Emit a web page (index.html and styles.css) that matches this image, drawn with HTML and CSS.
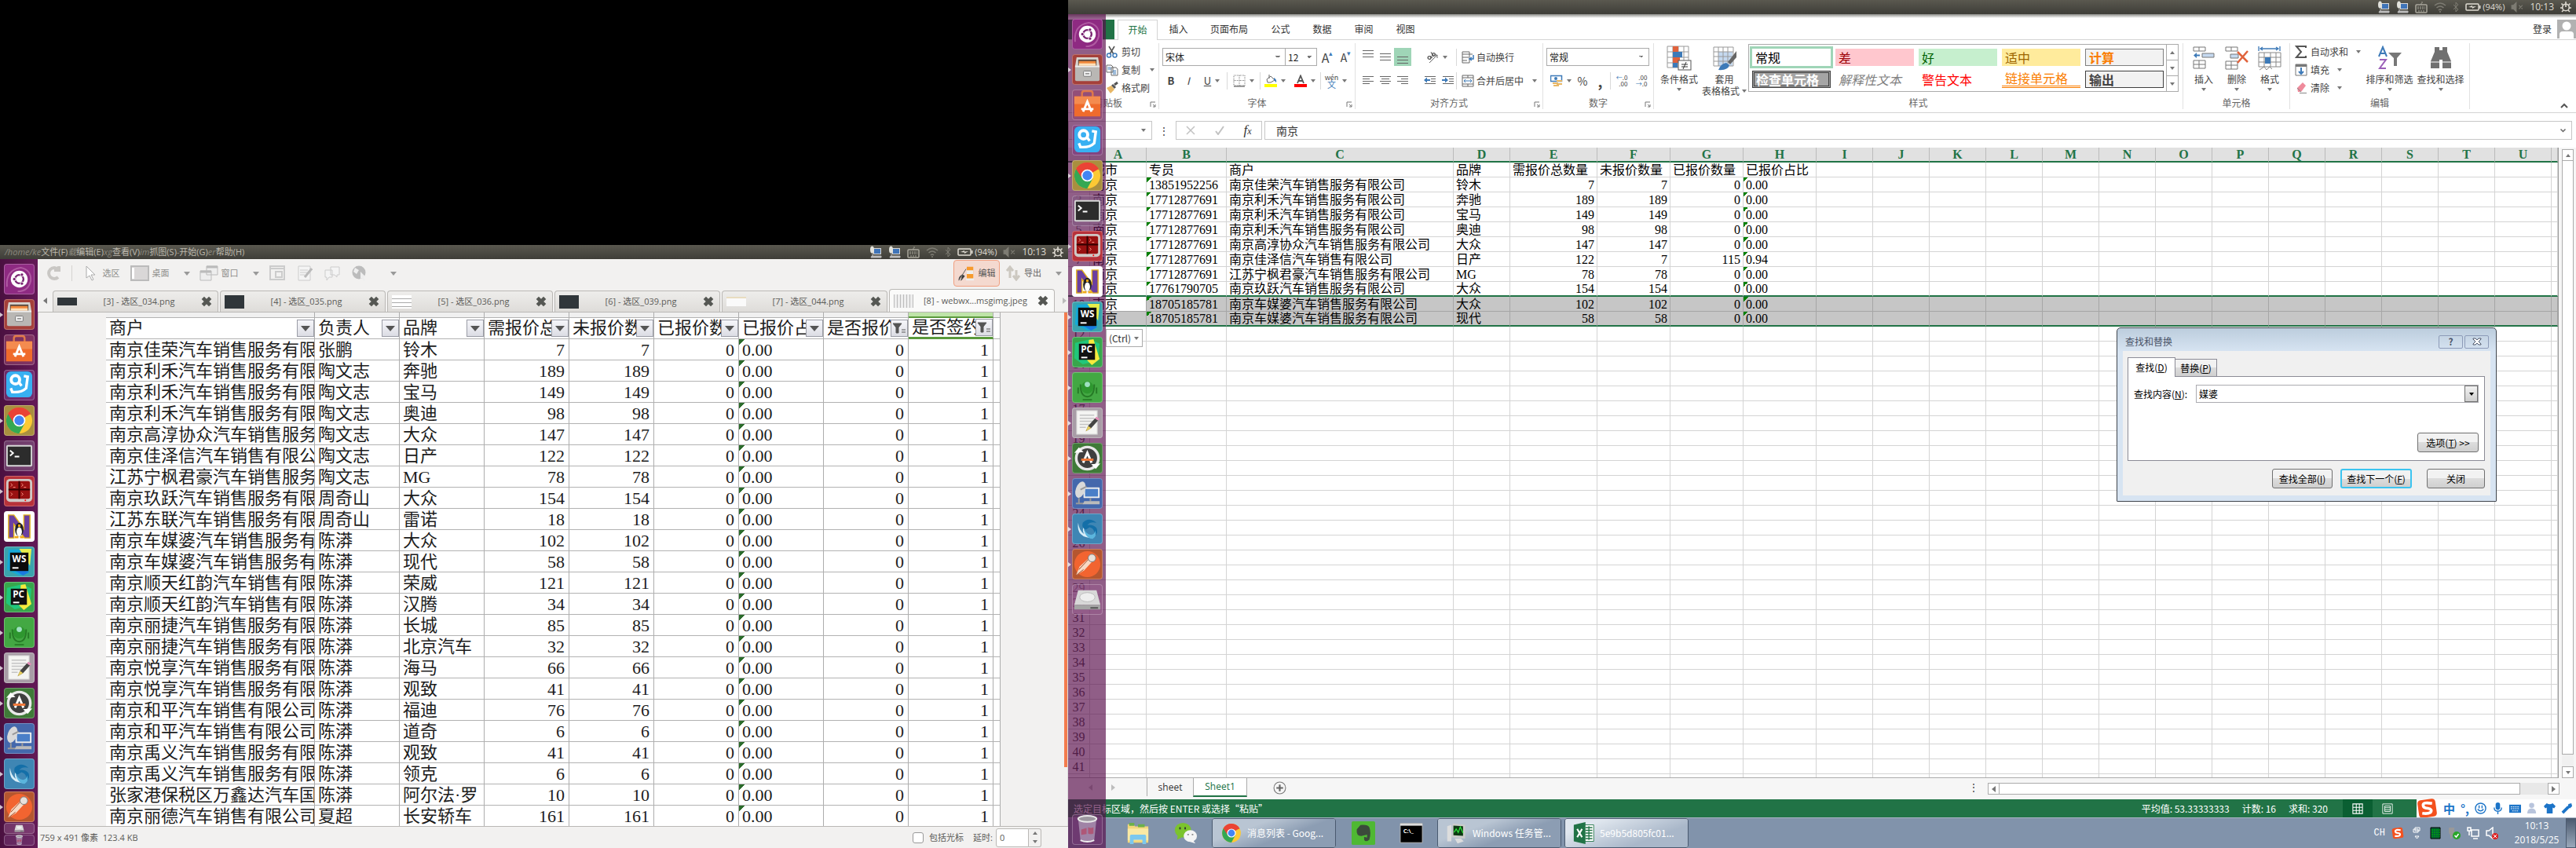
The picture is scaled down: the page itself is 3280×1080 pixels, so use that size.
FILE: index.html
```html
<!DOCTYPE html>
<html lang="zh-CN">
<head>
<meta charset="utf-8">
<title>桌面</title>
<link rel="stylesheet" href="styles.css">
</head>
<body>
<svg class="defs" aria-hidden="true">
  <symbol id="a-ubuntu" viewBox="0 0 40 40"><path d="M4 30Q2 8 22 5Q36 8 35 22Q32 36 18 36" fill="none" stroke="#c77bb8" stroke-width="2" opacity=".6"/><circle cx="20" cy="20" r="11" fill="#fff"/><circle cx="20" cy="20" r="5.500" fill="none" stroke="#77216f" stroke-width="2.400"/><circle cx="13.500" cy="20" r="2.200" fill="#77216f" stroke="#fff"/><circle cx="23.500" cy="14.200" r="2.200" fill="#77216f" stroke="#fff"/><circle cx="23.500" cy="25.800" r="2.200" fill="#77216f" stroke="#fff"/></symbol>
  <symbol id="a-files" viewBox="0 0 40 40"><path d="M6 4h28l2 12H4z" fill="#d8d4d0"/><path d="M8 7h24v9H8z" fill="#5b4a40"/><path d="M9 9h22v7H9z" fill="#f0883c"/><path d="M9 12h22v3H9z" fill="#ffe0b8"/><rect x="4" y="15" width="32" height="20" rx="2" fill="#b9b7b4"/><rect x="4" y="15" width="32" height="2" fill="#eee"/><rect x="15" y="22" width="10" height="7" rx="1" fill="#eee" stroke="#777"/><path d="M17.500 25.500h5" stroke="#555"/></symbol>
  <symbol id="a-store" viewBox="0 0 40 40"><path d="M13 11V5q0-3 3-3h8q3 0 3 3v6" fill="none" stroke="#e0794a" stroke-width="2.500"/><path d="M3 9h34v26H3z" fill="#ef6b2c"/><path d="M3 9h34v10H3z" fill="#f48b4f"/><path d="M14.500 29L20 16l5.500 13M12 25.500h16" fill="none" stroke="#fff" stroke-width="3"/></symbol>
  <symbol id="a-blue" viewBox="0 0 40 40"><rect x="3" y="2" width="34" height="34" rx="6" fill="#38b0f2"/><circle cx="15" cy="13" r="5.500" fill="none" stroke="#fff" stroke-width="4"/><path d="M26 8l5 1-2 15q-6 6-18 5l-2-5M20 17l3 4" fill="none" stroke="#fff" stroke-width="3.500"/></symbol>
  <symbol id="a-chrome" viewBox="0 0 40 40"><circle cx="20" cy="20" r="17" fill="#fcc934"/><path d="M20 20L5.300 11.500A17 17 0 0 1 34.700 11.500z" fill="#ea4335"/><path d="M20 20L5.300 11.500A17 17 0 0 0 20 37l7-13z" fill="#34a853"/><path d="M20 12h15a17 17 0 0 0-29.700-.5L12 22z" fill="#ea4335"/><circle cx="20" cy="20" r="8" fill="#fff"/><circle cx="20" cy="20" r="6.300" fill="#4285f4"/></symbol>
  <symbol id="a-term" viewBox="0 0 40 40"><rect x="3" y="6" width="34" height="28" rx="2" fill="#d5d5d5"/><rect x="5" y="8" width="30" height="24" fill="#2c2c2c"/><path d="M8 13l4 3.500L8 20M14 21h6" fill="none" stroke="#fff" stroke-width="2"/></symbol>
  <symbol id="a-red" viewBox="0 0 40 40"><rect x="3" y="4" width="34" height="30" rx="5" fill="#cfc9c6"/><rect x="6" y="7" width="28" height="23" rx="2" fill="#991111"/><path d="M20 7v23M6 18h28" stroke="#300" stroke-width="2"/><path d="M9 10l2 2-2 2M23 10l2 2-2 2M9 22l2 2-2 2M23 22l2 2-2 2M12 15h3M26 15h3" stroke="#ff9a8a" fill="none"/><circle cx="28" cy="32" r="1" fill="red"/></symbol>
  <symbol id="a-nav" viewBox="0 0 40 40"><rect x="1" y="1" width="38" height="38" rx="2" fill="#fff"/><path d="M6 5h7l13 18V5h8v30h-7L13 17v18H6z" fill="#6b3fa0" stroke="#e3b11b" stroke-width="1.500"/><ellipse cx="20" cy="24" rx="5.500" ry="9" fill="#222"/><ellipse cx="20" cy="27" rx="3.500" ry="6" fill="#fff"/><path d="M14 34h5M21 34h5M18.500 19h3" stroke="#f0a818" stroke-width="3"/></symbol>
  <symbol id="a-ws" viewBox="0 0 40 40"><path d="M6 4l22-1 8 8-4 24-12 3L4 30z" fill="#16a9d8"/><path d="M20 3h16l-2 22z" fill="#e8ee4a"/><path d="M7 27l26 6-8 5z" fill="#1a7ae0"/><rect x="8" y="8" width="24" height="24" fill="#0b0b0b"/><path d="M11 28h8" stroke="#fff" stroke-width="2"/><text x="20" y="20" font-size="12">WS</text></symbol>
  <symbol id="a-pc" viewBox="0 0 40 40"><path d="M4 8L24 3l12 6-2 22-20 5L3 28z" fill="#21c77b"/><path d="M22 4l6-1 8 26-10 8-6-6z" fill="#f5ea3d"/><rect x="9" y="9" width="21" height="21" fill="#111"/><path d="M12 27h8" stroke="#fff" stroke-width="2"/><text x="19" y="21" font-size="12">PC</text></symbol>
  <symbol id="a-green" viewBox="0 0 40 40"><path d="M11 16q0 16 9 16t9-16M8 20v8M32 20v8M14 36h12" fill="none" stroke="#267a26" stroke-width="2"/><circle cx="20" cy="20" r="8" fill="#2e972f"/><circle cx="20" cy="16" r="3.500" fill="#9fe0c0"/></symbol>
  <symbol id="a-edit" viewBox="0 0 40 40"><rect x="6" y="4" width="27" height="31" fill="#f4f4f2" stroke="#ccc"/><path d="M10 10h19M10 14h19M10 18h19M10 22h14M10 26h8" stroke="#c4c4c4" stroke-width="1.500"/><path d="M18 31l3-7 9-10 4 3-9 10z" fill="#444"/><path d="M30 14l2-2 4 3-2 2z" fill="#e58bb7"/><path d="M18 31l3-7 4 3z" fill="#e8cf5e"/></symbol>
  <symbol id="a-update" viewBox="0 0 40 40"><circle cx="20" cy="20" r="14.500" fill="#3f3f3f" stroke="#e8e8e8" stroke-width="3.500"/><path d="M3 13l6-7 6 6zM37 27l-6 7-6-6z" fill="#fff"/><path d="M14.500 26L20 13l5.500 13" fill="none" stroke="#fff" stroke-width="3"/><path d="M12 22h16" stroke="#f2793a" stroke-width="3"/></symbol>
  <symbol id="a-remote" viewBox="0 0 40 40"><rect x="15" y="12" width="21" height="14" rx="1" fill="#eee"/><rect x="17" y="14" width="17" height="10" fill="#4a7fc8"/><ellipse cx="11" cy="15" rx="6" ry="11" fill="#d9d9d9" transform="rotate(20 11 15)"/><path d="M11 15l8-4M9 26v6M5 33h10M24 26v4" stroke="#999" stroke-width="2"/><path d="M16 30h20v4H14z" fill="#bbb"/></symbol>
  <symbol id="a-shutter" viewBox="0 0 40 40"><path d="M8 12q-3 20 20 20-12-4-13-14-2 5 1 9-7-5-8-15z" fill="#d9eef8"/><path d="M14 12q8-8 18 0-8-2-12 3 8-1 12 4 3 6-3 11 2-10-6-12l-5 3q-6-2-4-9z" fill="#146fa8"/><path d="M15 18q2 9 10 10 5-1 5-6 3 8-3 11-10 0-12-15z" fill="#5bb5dd"/></symbol>
  <symbol id="a-post" viewBox="0 0 40 40"><circle cx="20" cy="20" r="17" fill="#f26430"/><path d="M5 35l5-12 12-11 5 4-11 12z" fill="#f7d9c4"/><path d="M9 27L22 13M5 35l10-8" stroke="#a34521" fill="none"/><circle cx="26" cy="12" r="5" fill="#e8e0da" stroke="#777"/></symbol>
  <symbol id="a-disk" viewBox="0 0 40 40"><path d="M8 8h24l5 19H3z" fill="#d8d8d8"/><path d="M3 27h34v6H3z" fill="#a5a5a5"/><ellipse cx="20" cy="17" rx="10" ry="6" fill="#eee" stroke="#bbb"/><path d="M24 31h10" stroke="#555" stroke-width="2"/></symbol>
  <symbol id="a-trash" viewBox="0 0 40 40"><path d="M8 6l3 28q9 4 18 0l3-28z" fill="#cbbfd2" opacity=".55"/><path d="M12 20l7-2v8l-7 1zM21 17q4 2 7 0v8q-4 2-7 0z" fill="#b54464" opacity=".7"/><ellipse cx="20" cy="6" rx="12" ry="4" fill="#9d97a0" stroke="#e8e8e8" stroke-width="2"/><path d="M11 34q9 4 18 0" stroke="#eee" stroke-width="2" fill="none"/></symbol>

  <symbol id="i-pcnet" viewBox="0 0 16 16"><rect x="5" y="3" width="10" height="8" fill="#d8d8d8"/><rect x="6" y="4" width="8" height="6" fill="#3f74b8"/><ellipse cx="3.500" cy="5" rx="2.500" ry="4.500" fill="#e2e2dc"/><path d="M3 13h12v2H2zM4 9v4" fill="#bbb" stroke="#bbb"/></symbol>
  <symbol id="i-kbd" viewBox="0 0 16 16"><rect x="1" y="5" width="14" height="10" rx="1" fill="none" stroke="#a9a79c" stroke-width="1.500"/><path d="M3 8h10M3 10h10M4 13h8M8 5V2h3" stroke="#a9a79c" stroke-dasharray="2 1" fill="none"/></symbol>
  <symbol id="i-wifi" viewBox="0 0 16 16"><path d="M1 6q7-6 14 0M3.500 9q4.500-4 9 0M6 12q2-2 4 0" fill="none" stroke="#7e7c73" stroke-width="1.500"/><circle cx="8" cy="14" r="1" fill="#7e7c73"/></symbol>
  <symbol id="i-bt" viewBox="0 0 8 16"><path d="M1 5l6 6-3 3V2l3 3-6 6" fill="none" stroke="#7e7c73"/></symbol>
  <symbol id="i-bat" viewBox="0 0 20 12"><rect x="1" y="2" width="16" height="8" rx="1" fill="none" stroke="#dfdbd2" stroke-width="1.500"/><path d="M18 4h1.500v4H18z" fill="#dfdbd2"/><path d="M4 6l5-2v1.500l5-.5-5 3V6.500z" fill="#dfdbd2"/></symbol>
  <symbol id="i-mute" viewBox="0 0 14 12"><path d="M1 4h2l3-3v10L3 8H1zM9 4l4 4M13 4L9 8" fill="#7e7c73" stroke="#7e7c73"/></symbol>
  <symbol id="i-gear" viewBox="0 0 14 14"><circle cx="7" cy="7.500" r="4.300" fill="none" stroke="#dfdbd2" stroke-width="1.600"/><path d="M7 0v7M1.500 2.500l2 2M12.500 2.500l-2 2M0 8h3M11 8h3M2 13l2-2M12 13l-2-2" stroke="#dfdbd2" stroke-width="1.600"/></symbol>
  <symbol id="i-x" viewBox="0 0 12 12"><path d="M2 2l8 8M10 2l-8 8" stroke="#555753" stroke-width="4"/></symbol>
  <symbol id="i-grid" viewBox="0 0 16 16"><path d="M1 1h14v14H1zM1 6h14M1 10.500h14M6 1v14M10.500 1v14" fill="none" stroke="currentColor" stroke-width="1.200"/></symbol>
  <symbol id="i-dots" viewBox="0 0 16 16"><path d="M1 1h14v13H1zM8 1v13M1 7.500h14" fill="none" stroke="#777" stroke-dasharray="1 1"/><path d="M1 15h14" stroke="#444"/></symbol>
  <symbol id="i-lines" viewBox="0 0 16 16"><path d="M1 3.500h14M1 7.500h14M1 11.500h14" stroke="#666"/></symbol>
  <symbol id="i-left" viewBox="0 0 16 16"><path d="M1 2.500h14M1 5.500h9M1 8.500h14M1 11.500h9" stroke="#666"/></symbol>
  <symbol id="i-center" viewBox="0 0 16 16"><path d="M1 2.500h14M3 5.500h10M1 8.500h14M3 11.500h10" stroke="#666"/></symbol>
  <symbol id="i-right" viewBox="0 0 16 16"><path d="M1 2.500h14M6 5.500h9M1 8.500h14M6 11.500h9" stroke="#666"/></symbol>
  <symbol id="i-out" viewBox="0 0 16 16"><path d="M1 2.500h14M9 5.500h6M9 8.500h6M1 11.500h14" stroke="#666"/><path d="M0 7l4-3.500V6h4v2H4v2.500z" fill="#3d7ab8"/></symbol>
  <symbol id="i-in" viewBox="0 0 16 16"><path d="M1 2.500h14M9 5.500h6M9 8.500h6M1 11.500h14" stroke="#666"/><path d="M8 7L4 3.500V6H0v2h4v2.500z" fill="#3d7ab8"/></symbol>
  <symbol id="i-orient" viewBox="0 0 16 16"><path d="M4 15L14 5M14 5v4M14 5h-4" stroke="#666" fill="none"/><g fill="none" stroke="#555" stroke-width="1.300"><circle cx="4" cy="8.500" r="1.900"/><path d="M5.500 6.500l2 2.500M6 1.500l3.500 5"/><circle cx="9.500" cy="4.500" r="1.900"/></g></symbol>
  <symbol id="i-wrap" viewBox="0 0 16 16"><path d="M1 1v14h9V1zM1 4h13M1 8h8M1 12h6" fill="none" stroke="#666"/><path d="M15 5v5h-4M13 8l-3 2 3 2" fill="none" stroke="#3d7ab8" stroke-width="1.500"/></symbol>
  <symbol id="i-merge" viewBox="0 0 16 16"><path d="M1 1h14v14H1zM1 4h14M1 12h14M8 1v3M8 12v3" fill="none" stroke="#666"/><path d="M3 8h10M5 6L3 8l2 2M11 6l2 2-2 2" fill="none" stroke="#3d7ab8"/></symbol>
  <symbol id="i-cut" viewBox="0 0 16 16"><path d="M4 1l6 10M11 1L5 11" stroke="#555" stroke-width="1.600"/><circle cx="4" cy="12.500" r="2.500" fill="none" stroke="#3d7ab8" stroke-width="1.500"/><circle cx="11.500" cy="12.500" r="2.500" fill="none" stroke="#3d7ab8" stroke-width="1.500"/></symbol>
  <symbol id="i-copy" viewBox="0 0 16 16"><path d="M1 2h6l2 2v7H1zM7 5h6l2 2v8H7z" fill="#fff" stroke="#666"/><path d="M2.500 5h4M2.500 7h4M9 9h4M9 11h4M9 13h4" stroke="#3d7ab8"/></symbol>
  <symbol id="i-brush" viewBox="0 0 16 16"><path d="M15 1l-4 3M8 4l4 4" stroke="#555" stroke-width="3"/><path d="M1 8l6-3 4 5-5 5z" fill="#e8b766"/></symbol>
  <symbol id="i-fill" viewBox="0 0 16 16"><path d="M3 6l5-4 5 5-5 3H4zM6 0v5" fill="none" stroke="#666"/><path d="M12 4q4 2 3 6l-3-3z" fill="#3d7ab8"/><rect y="12" width="16" height="4" fill="#ff0"/></symbol>
  <symbol id="i-fcolor" viewBox="0 0 16 16"><path d="M4 11L8 1.500 12 11M5.500 8h5" fill="none" stroke="#555" stroke-width="1.800"/><rect y="12" width="16" height="4" fill="#f00"/></symbol>
  <symbol id="i-money" viewBox="0 0 16 16"><rect x=".5" y="1.500" width="14" height="7" fill="#fff" stroke="#3d7ab8" stroke-width="1.500"/><circle cx="7" cy="5" r="2" fill="#3d7ab8"/><path d="M8 7h7v2H8zM3 10h7v2H3zM8 11h7v2H8zM4 13h7v2H4z" fill="#e8b766"/></symbol>
  <symbol id="i-cond" viewBox="0 0 32 32"><path d="M1 1h27v27H1zM1 8h27M1 15h27M1 22h27M8 1v27M15 1v27M22 1v27" fill="#fff" stroke="#999"/><path d="M8 1h7v7H8zM8 15h9v7H8z" fill="#e0623c"/><path d="M8 8h12v7H8zM8 22h6v6H8z" fill="#3d7ab8"/><rect x="15" y="19" width="16" height="12" fill="#fff" stroke="#555"/><path d="M19 24h8M19 27h8M25 21l-4 9" stroke="#333"/></symbol>
  <symbol id="i-tstyle" viewBox="0 0 32 32"><path d="M8 8h18v18H8z" fill="#c5d9f0"/><path d="M2 2h25v24H2zM2 8h25M2 14h25M2 20h25M8 2v24M14 2v24M20 2v24" fill="none" stroke="#999"/><path d="M31 7v8l-8 9-3-3z" fill="#666"/><path d="M8 31q3-8 10-9l4 3q-2 7-14 6z" fill="#3d7ab8"/></symbol>
  <symbol id="i-insert" viewBox="0 0 32 32"><path d="M3 2h15v5H3zM10 2v5M3 19h15v10H3zM10 19v10M3 24h15" fill="none" stroke="#777"/><path d="M14 10h15v5H14z" fill="#c5d9f0" stroke="#777"/><path d="M3 12.500L7 9v2.500h4v2H7V16z" fill="#3d7ab8"/></symbol>
  <symbol id="i-delete" viewBox="0 0 32 32"><path d="M2 2h15v5H2zM9 2v5M2 20h15v10H2zM9 20v10M2 25h15" fill="none" stroke="#777"/><path d="M8 11h10v5H8z" fill="#c5d9f0" stroke="#777"/><path d="M17 8l13 13M30 7L17 22" stroke="#e0623c" stroke-width="2.500"/></symbol>
  <symbol id="i-format" viewBox="0 0 32 32"><path d="M2 1v6M29 1v6M4 4h23M7 2L4 4l3 2M24 2l3 2-3 2" stroke="#3d7ab8" fill="none" stroke-width="1.300"/><path d="M2 9h28v18H2zM2 15h28M2 21h28M9 9v18M17 9v18M24 9v18M3 31l6-4 3 4 4-4 3 3" fill="none" stroke="#888"/><path d="M10 15h7v8h-7z" fill="#3d7ab8"/></symbol>
  <symbol id="i-sum" viewBox="0 0 16 16"><path d="M14 3V1H2l6 7-6 7h12v-2" fill="none" stroke="#555" stroke-width="2"/></symbol>
  <symbol id="i-down" viewBox="0 0 16 16"><path d="M1 1h14v14H1z" fill="#fff" stroke="#777"/><path d="M1 1h14v3H1z" fill="#777"/><path d="M8 5v8M5 10l3 3 3-3" stroke="#3d7ab8" stroke-width="2" fill="none"/></symbol>
  <symbol id="i-erase" viewBox="0 0 16 16"><path d="M3 8l7-7 4 4-6 8H4z" fill="#ef8a9b"/><path d="M6 14.500h9M3 8l5 5" stroke="#888"/></symbol>
  <symbol id="i-sort" viewBox="0 0 32 32"><path d="M2 14L7 2l5 12M4 10h6" stroke="#3d7ab8" stroke-width="2" fill="none"/><path d="M3 18h8L3 29h8" stroke="#9a5fb8" stroke-width="2" fill="none"/><path d="M14 9h17l-6 7v10h-4V16z" fill="#777"/></symbol>
  <symbol id="i-find" viewBox="0 0 32 32"><path d="M8 2h6v4h4V2h6v6l5 12v9H18V18h-4v11H3v-9L8 8z" fill="#707070"/><path d="M3 21h11M18 21h11" stroke="#fff"/></symbol>
  <symbol id="i-launch" viewBox="0 0 8 8"><path d="M1 7V1h6M4 4l3 3M7 4v3H4" fill="none" stroke="#777"/></symbol>
  <symbol id="i-sogou" viewBox="0 0 26 26"><rect x="2" y="2" width="22" height="22" rx="4" fill="#f4511e" transform="rotate(-8 13 13)"/><path d="M19 7q-11-2-11 2t6 4q6 1 3 5-3 2-10 1" fill="none" stroke="#fff" stroke-width="3.500"/></symbol>
  <symbol id="i-folder" viewBox="0 0 32 32"><path d="M2 4h8l2 3h18v22H2z" fill="#f3d77b"/><path d="M4 2h7v4H4zM16 4h9v4h-9z" fill="#6bb04a"/><path d="M2 10h28v16H2z" fill="#fae9a4"/><path d="M5 31V20q0-2 2-2h18q2 0 2 2v11h-5v-6H10v6z" fill="#7cc8ee"/></symbol>
  <symbol id="i-wechat" viewBox="0 0 32 32"><ellipse cx="12" cy="12" rx="11" ry="10" fill="#7bc32d"/><path d="M5 19l-1 6 6-3z" fill="#7bc32d"/><ellipse cx="22" cy="20" rx="9" ry="8" fill="#f4f4f4"/><path d="M26 26l3 4-7-2z" fill="#f4f4f4"/><path d="M8 8v3M15 8v3" stroke="#333" stroke-width="2"/><path d="M19 17v2M25 17v2" stroke="#888" stroke-width="2"/></symbol>
  <symbol id="i-ever" viewBox="0 0 32 32"><rect width="32" height="32" rx="2" fill="#4fb833"/><path d="M7 11l5-6q10-1 12 3 3 8 0 17-5 4-7 0v-4l4 1v-4l-8 2q-7 0-6-9z" fill="#3b4a3b"/></symbol>
  <symbol id="i-cmd" viewBox="0 0 32 32"><path d="M1 3h30v26H1z" fill="#000" stroke="#bbb"/><path d="M1 3h30v3H1z" fill="#ddd"/><text x="12" y="16" font-size="8">C:\_</text></symbol>
  <symbol id="i-taskm" viewBox="0 0 32 32"><path d="M10 2l18 2v20L8 22z" fill="#ccc"/><path d="M11 5l14 1v14l-14-1z" fill="#0c3a12"/><path d="M12 15l3-5 3 5 3-8 4 9" stroke="#2ee03c" stroke-width="1.500" fill="none"/><path d="M2 6l6-2v24H2z" fill="#ddd"/><path d="M13 24h9l4 4-9 3z" fill="#ddd"/></symbol>
  <symbol id="i-excel" viewBox="0 0 32 32"><path d="M15 4h15v24H15z" fill="#fff" stroke="#217346"/><path d="M18 8h10M18 12h10M18 16h10M18 20h10M18 24h10M23 6v20" stroke="#217346" stroke-width="1.500"/><path d="M1 4l17-4v32L1 28z" fill="#217346"/><path d="M6 10l7 12M13 10L6 22" stroke="#fff" stroke-width="2.500"/></symbol>
</svg>

<div class="desktop">
  <section class="screen screen--left">
    <div class="void"></div>
    <header class="panel">
      <nav class="panel-menu" aria-label="应用菜单"><i>/home/ke</i><span>文件(F)</span><i>载</i><span>编辑(E)</span><i>xg</i><span>查看(V)</span><i>im</i><span>抓图(S)</span><i>-</i><span>开始(G)</span><i>er</i><span>帮助(H)</span></nav>
      <div class="indicators"></div>
    </header>
    <div class="work">
      <ul class="launcher launcher--solid"></ul>
      <main class="shutter">
        <div class="sh-toolbar">
          <button aria-label="重做"><svg viewBox="0 0 20 20"><path d="M16 5a7 7 0 1 0 0 10M11 6h6V1" fill="none" stroke="#c9c7c4" stroke-width="4"/></svg></button>
          <hr>
          <button class="w70"><svg viewBox="0 0 20 20"><path d="M5 1v15l4-3 3 6 2-1-3-6h5z" fill="#fff" stroke="#aaa"/></svg>选区</button>
          <button class="w89"><svg class="wide" viewBox="0 0 24 20"><path d="M1 1h22v18H1z" fill="#d9d7d7" stroke="#bbb" stroke-width="2"/><path d="M2 3v14h3V3z" fill="#fff"/></svg>桌面<b class="caret"></b></button>
          <button class="w89"><svg class="wide" viewBox="0 0 24 20"><path d="M9 1h14v11H9zM1 7h14v12H1z" fill="#eee" stroke="#bbb"/><path d="M9 2h14M1 8h14" stroke="#bbb" stroke-width="3"/></svg>窗口<b class="caret"></b></button>
          <button aria-label="区域"><svg viewBox="0 0 20 20"><path d="M1 1h18v17H1zM1 4h18M8 8h8v7H8z" fill="none" stroke="#ccc" stroke-width="2"/></svg></button>
          <button aria-label="菜单"><svg viewBox="0 0 20 20"><path d="M2 1h15v18H2zM4 6h10M4 9h9M4 12h6" fill="#f4f4f4" stroke="#ccc"/><path d="M10 15l9-11" stroke="#bbb" stroke-width="3"/></svg></button>
          <button aria-label="提示"><svg viewBox="0 0 20 20"><path d="M8 2h11v10l-3 0v3l-3-3H8zM1 6h9v9H6l-3 4v-4H1z" fill="#f4f4f4" stroke="#ccc"/></svg></button>
          <button aria-label="网页"><svg viewBox="0 0 20 20"><circle cx="9" cy="9" r="8.500" fill="#bcbcbc"/><path d="M4 3l5 3-3 5-4-3zM11 8v10l2-2 2 4 2-1-2-4h3z" fill="#eee"/></svg></button>
          <b class="caret"></b>
          <div class="push"></div>
          <button class="sh-edit"><svg viewBox="0 0 24 24"><path d="M1 22q0-6 5-8l5-8M6 14l3 2-5 6z" fill="#333" stroke="#555"/><path d="M12 3h9v18h-9z" fill="#f79a2d"/><path d="M12 8h9v5h-9zM11 19h11v3H11z" fill="#eee"/></svg>编辑</button>
          <button class="sh-export"><svg viewBox="0 0 20 20"><path d="M6 16V4M2 7l4-5 4 5M14 6v10M10 13l4 5 4-5" fill="none" stroke="#ccc8c0" stroke-width="3"/></svg>导出<b class="caret"></b></button>
        </div>
        <div class="sh-tabs">
          <b class="arrow-l"></b>
          <div class="sh-tab"><i class="thumb thumb--dark"></i><a href="#t3">[3] - 选区_034.png</a><svg><use href="#i-x"/></svg></div>
          <div class="sh-tab"><i class="thumb thumb--dark thumb--tall"></i><a href="#t4">[4] - 选区_035.png</a><svg><use href="#i-x"/></svg></div>
          <div class="sh-tab"><i class="thumb thumb--text"></i><a href="#t5">[5] - 选区_036.png</a><svg><use href="#i-x"/></svg></div>
          <div class="sh-tab"><i class="thumb thumb--dark thumb--tall"></i><a href="#t6">[6] - 选区_039.png</a><svg><use href="#i-x"/></svg></div>
          <div class="sh-tab"><i class="thumb thumb--form"></i><a href="#t7">[7] - 选区_044.png</a><svg><use href="#i-x"/></svg></div>
          <div class="sh-tab sh-tab--on"><i class="thumb thumb--cols"></i><a href="#t8">[8] - webwx...msgimg.jpeg</a><svg><use href="#i-x"/></svg></div>
          <b class="arrow-r"></b>
        </div>
        <div class="sh-view">
          <table class="photo"><colgroup><col class="c-name"><col span="8" class="c-std"><col class="c-rest"></colgroup><thead></thead><tbody></tbody></table>
        </div>
        <footer class="sh-status"><span>759 x 491 像素&nbsp; 123.4 KB</span><div class="push"></div><label><input type="checkbox">包括光标</label><label>延时:<input class="spin" type="text" value="0"><span class="steps"><b class="up"></b><b class="caret"></b></span></label></footer>
      </main>
    </div>
  </section>

  <section class="screen screen--right">
    <header class="panel"><div class="indicators"></div></header>
    <div class="excel">
      <nav class="x-tabs">
        <a class="x-file" href="#file" aria-label="文件"></a>
        <a class="on" href="#home">开始</a><a href="#ins">插入</a><a href="#page" class="x-wide">页面布局</a><a href="#f">公式</a><a href="#d">数据</a><a href="#r">审阅</a><a href="#v">视图</a>
        <div class="push"></div><a href="#login">登录</a>
        <svg class="avatar" viewBox="0 0 24 24"><path d="M0 0h24v24H0z" fill="#b1b1b1"/><circle cx="12" cy="8" r="5.500" fill="#fff"/><path d="M3 24v-5q0-4 4-4h10q4 0 4 4v5z" fill="#fff"/></svg>
      </nav>
      <div class="ribbon">
        <section class="grp g-clip"><div class="body stack">
          <button><svg><use href="#i-cut"/></svg>剪切</button>
          <button><svg><use href="#i-copy"/></svg>复制<b class="caret far"></b></button>
          <button><svg><use href="#i-brush"/></svg>格式刷</button>
        </div><h6>剪贴板<svg><use href="#i-launch"/></svg></h6></section>
        <section class="grp g-font"><div class="body">
          <div class="row r-font1"><select aria-label="字体"><option>宋体</option></select><select aria-label="字号"><option>12</option></select><button class="big-a">A<sup>▴</sup></button><button class="small-a">A<sup>▾</sup></button></div>
          <div class="row r-font2"><button><strong>B</strong></button><button><em>I</em></button><button class="bar"><u>U</u><b class="caret"></b></button><button class="bar" aria-label="边框"><svg><use href="#i-dots"/></svg><b class="caret"></b></button><button aria-label="填充颜色"><svg><use href="#i-fill"/></svg><b class="caret"></b></button><button class="bar" aria-label="字体颜色"><svg><use href="#i-fcolor"/></svg><b class="caret"></b></button><button><span class="wen">wén<br><i>文</i></span><b class="caret"></b></button></div>
        </div><h6>字体<svg><use href="#i-launch"/></svg></h6></section>
        <section class="grp g-align"><div class="body">
          <div class="row r-al"><button aria-label="顶端对齐" class="lift"><svg><use href="#i-lines"/></svg></button><button aria-label="垂直居中"><svg><use href="#i-lines"/></svg></button><button aria-label="底端对齐" class="lit"><svg><use href="#i-lines"/></svg></button><button class="gap bar" aria-label="方向"><svg><use href="#i-orient"/></svg><b class="caret"></b></button><button class="txt"><svg><use href="#i-wrap"/></svg>自动换行</button></div>
          <div class="row r-al2"><button aria-label="左对齐"><svg><use href="#i-left"/></svg></button><button aria-label="居中"><svg><use href="#i-center"/></svg></button><button aria-label="右对齐"><svg><use href="#i-right"/></svg></button><button aria-label="减少缩进"><svg><use href="#i-out"/></svg></button><button class="bar" aria-label="增加缩进"><svg><use href="#i-in"/></svg></button><button class="txt"><svg><use href="#i-merge"/></svg>合并后居中<b class="caret"></b></button></div>
        </div><h6>对齐方式<svg><use href="#i-launch"/></svg></h6></section>
        <section class="grp g-num"><div class="body">
          <div class="row r-num1"><select aria-label="数字格式"><option>常规</option></select></div>
          <div class="row r-num2"><button aria-label="会计格式"><svg><use href="#i-money"/></svg><b class="caret"></b></button><button>%</button><button class="bar comma">,</button><button class="dec"><span><i>←</i>.0<br>.00</span></button><button class="dec"><span>.00<br><i>→</i>.0</span></button></div>
        </div><h6>数字<svg><use href="#i-launch"/></svg></h6></section>
        <section class="grp g-style"><div class="body sty">
          <button class="tall"><svg><use href="#i-cond"/></svg>条件格式<b class="caret"></b></button>
          <button class="tall"><svg><use href="#i-tstyle"/></svg>套用<span>表格格式<b class="caret"></b></span></button>
          <div class="gallery">
            <button class="st normal">常规</button><button class="st bad">差</button><button class="st good">好</button><button class="st neutral">适中</button><button class="st calc">计算</button>
            <button class="st check">检查单元格</button><button class="st explain">解释性文本</button><button class="st warn">警告文本</button><button class="st linked">链接单元格</button><button class="st output">输出</button>
          </div>
          <div class="gal-nav"><button aria-label="上"><b class="up"></b></button><button aria-label="下"><b class="caret"></b></button><button aria-label="更多"><b class="caret over"></b></button></div>
        </div><h6>样式</h6></section>
        <section class="grp g-cell"><div class="body cells">
          <button class="tall"><svg><use href="#i-insert"/></svg>插入<b class="caret"></b></button><button class="tall"><svg><use href="#i-delete"/></svg>删除<b class="caret"></b></button><button class="tall"><svg><use href="#i-format"/></svg>格式<b class="caret"></b></button>
        </div><h6>单元格</h6></section>
        <section class="grp g-edit"><div class="body edit">
          <div class="stack"><button><svg><use href="#i-sum"/></svg>自动求和<b class="caret"></b></button><button><svg><use href="#i-down"/></svg>填充<b class="caret"></b></button><button><svg><use href="#i-erase"/></svg>清除<b class="caret"></b></button></div>
          <button class="tall"><svg><use href="#i-sort"/></svg>排序和筛选<b class="caret"></b></button><button class="tall"><svg><use href="#i-find"/></svg>查找和选择<b class="caret"></b></button>
        </div><h6>编辑</h6></section>
        <div class="push"></div><svg class="fold" viewBox="0 0 10 8"><path d="M1 6l4-4 4 4" fill="none" stroke="#555" stroke-width="2"/></svg>
      </div>
      <div class="formula">
        <div class="namebox"><b class="caret"></b></div><span class="grip">⋮</span>
        <div class="fx"><svg viewBox="0 0 12 12"><path d="M1 1l10 10M11 1L1 11" stroke="#c2c2c2" stroke-width="1.500"/></svg><svg viewBox="0 0 12 12"><path d="M1 7l3 4 7-10" fill="none" stroke="#c2c2c2" stroke-width="2"/></svg><em>f<small>x</small></em></div>
        <input type="text" aria-label="编辑栏" value="南京"><svg class="more" viewBox="0 0 10 8"><path d="M1 2l4 4 4-4" fill="none" stroke="#666" stroke-width="2"/></svg>
      </div>
      <div class="sheet-wrap">
        <div class="sheet"><table class="grid"><colgroup></colgroup><thead></thead><tbody></tbody></table></div>
        <div class="vbar"><button aria-label="向上"><b class="up"></b></button><div class="vthumb"></div><div class="vtrack"></div><button aria-label="向下"><b class="caret"></b></button></div>
        <div class="paste-tag">(Ctrl)<b class="caret"></b></div>
        <form class="dialog" role="dialog" aria-label="查找和替换">
          <div class="d-title"><span>查找和替换</span><button type="button">?</button><button type="button" aria-label="关闭"><svg viewBox="0 0 12 12"><path d="M1 2h3l2 2 2-2h3v1L8 6l3 3v1H8L6 8l-2 2H1V9l3-3-3-3z" fill="#fff" stroke="#4a5468"/></svg></button></div>
          <div class="d-body">
            <div class="d-tabs"><button type="button" class="on">查找(<u>D</u>)</button><button type="button">替换(<u>P</u>)</button></div>
            <div class="d-pane"><div class="d-field"><label for="what">查找内容(<u>N</u>):</label><div class="combo"><input id="what" type="text" value="媒婆"><button type="button" aria-label="展开"><b class="caret"></b></button></div></div>
            <button type="button" class="btn b-opt">选项(<u>T</u>) &gt;&gt;</button></div>
            <div class="d-foot"><button type="button" class="btn b-all">查找全部(<u>I</u>)</button><button type="button" class="btn b-next">查找下一个(<u>F</u>)</button><button type="button" class="btn b-close">关闭</button></div>
          </div>
        </form>
      </div>
      <div class="x-sheets"><span class="nav"><b class="arrow-l"></b><b class="arrow-r"></b></span><a href="#s0">sheet</a><a href="#s1" class="on">Sheet1</a>
        <svg class="plus" viewBox="0 0 16 16"><circle cx="8" cy="8" r="7" fill="none" stroke="#777"/><path d="M8 4v8M4 8h8" stroke="#666" stroke-width="2"/></svg>
        <div class="push"></div><span class="grip">⋮</span><div class="hbar"><button aria-label="向左"><b class="arrow-l"></b></button><div class="hthumb"></div><div class="htrack"></div><button aria-label="向右"><b class="arrow-r"></b></button></div></div>
      <footer class="x-status"><span>选定目标区域，然后按 ENTER 或选择“粘贴”</span><div class="push"></div><span>平均值: 53.33333333</span><span>计数: 16</span><span>求和: 320</span>
        <button class="lit" aria-label="普通"><svg><use href="#i-grid"/></svg></button><button aria-label="页面布局"><svg viewBox="0 0 16 16"><path d="M1 1h14v14H1zM4 4h8v8H4zM4 6.500h8M4 9.500h8" fill="none" stroke="#fff"/></svg></button>
        <div class="ime"><svg class="logo"><use href="#i-sogou"/></svg><span>中</span><span>°,</span>
          <svg viewBox="0 0 16 16"><circle cx="8" cy="8" r="7" fill="none" stroke="#1c74c8" stroke-width="1.500"/><path d="M6 4v4M10 4v4M4 9q4 5 8 0" stroke="#1c74c8" stroke-width="1.500" fill="none"/></svg>
          <svg viewBox="0 0 16 16"><rect x="5" y="0" width="6" height="10" rx="3" fill="#1c74c8"/><path d="M3 7q0 5 5 5t5-5M8 12v4" fill="none" stroke="#1c74c8" stroke-width="1.500"/></svg>
          <svg viewBox="0 0 16 16"><rect y="3" width="16" height="11" fill="#1c74c8"/><path d="M2 6h12M2 8.500h12M4 11.500h8" stroke="#fff" stroke-dasharray="2 1"/></svg>
          <svg viewBox="0 0 16 16"><circle cx="7" cy="4" r="3.500" fill="#b8c4dc"/><path d="M1 15q0-7 6-7t6 7z" fill="#b8c4dc"/></svg>
          <svg viewBox="0 0 16 16"><path d="M4 1q4 3 8 0l4 4-2 3-2-1v8H4V7L2 8 0 5z" fill="#1c74c8"/></svg>
          <svg viewBox="0 0 16 16"><path d="M2 14l8-8" stroke="#1c74c8" stroke-width="4"/><path d="M14 1l-4 1-1 4 3 2 3-3z" fill="#1c74c8"/></svg></div>
      </footer>
    </div>
    <footer class="taskbar">
      <button class="t-icon" aria-label="资源管理器"><svg><use href="#i-folder"/></svg></button><button class="t-icon" aria-label="微信"><svg><use href="#i-wechat"/></svg></button>
      <button class="t-win"><svg><use href="#a-chrome"/></svg>消息列表 - Goog...</button>
      <button class="t-icon" aria-label="印象笔记"><svg><use href="#i-ever"/></svg></button><button class="t-icon" aria-label="命令提示符"><svg><use href="#i-cmd"/></svg></button>
      <button class="t-win"><svg><use href="#i-taskm"/></svg>Windows 任务管...</button><button class="t-win t-win--on"><svg><use href="#i-excel"/></svg>5e9b5d805fc01...</button>
      <div class="push"></div>
      <div class="tray"><span>CH</span><svg><use href="#i-sogou"/></svg>
        <svg viewBox="0 0 16 16"><path d="M6 1h6v4H6zM4 3h6v4H4zM6 12h5l-2.500 3z" fill="none" stroke="#fff"/></svg>
        <svg viewBox="0 0 16 16"><path d="M2 1h12v14H2z" fill="#063" stroke="#000"/><path d="M4 3v10M7 3v10M10 3v10M13 3v10" stroke="#0b0" stroke-dasharray="2 1"/></svg>
        <svg viewBox="0 0 16 16"><path d="M1 1h7v7q0 3-3 3v4H3v-5q-2-1-2-3z" fill="#999"/><circle cx="11" cy="11" r="5" fill="#2aa52a"/><path d="M8.500 11l2 2 3-4" stroke="#fff" stroke-width="1.500" fill="none"/></svg>
        <svg viewBox="0 0 16 16"><path d="M6 4h9v8H6zM8 15h6M1 1h4v4H1zM3 5v6" fill="none" stroke="#fff" stroke-width="1.500"/></svg>
        <svg viewBox="0 0 16 16"><path d="M1 5h3l5-4v14l-5-4H1z" fill="none" stroke="#fff" stroke-width="1.500"/><circle cx="12" cy="12" r="4" fill="#d22"/><path d="M10 10l4 4M14 10l-4 4" stroke="#fff"/></svg></div>
      <div class="clock">10:13<br>2018/5/25</div><div class="peek"></div>
    </footer>
    <ul class="launcher launcher--glass"></ul>
  </section>
</div>
<script src="app.js"></script>
</body>
</html>
```
FILE: styles.css
```css
* { box-sizing: border-box; }
body { margin: 0; height: 100vh; background: #000; font-family: "Open Sans", "Noto Sans CJK SC", sans-serif; font-size: 12px; line-height: 16px; color: #333; }
button, input, select { font: inherit; color: inherit; margin: 0; padding: 0; border: 0; background: none; border-radius: 0; }
button { display: flex; align-items: center; justify-content: center; white-space: nowrap; }
a { color: inherit; text-decoration: none; }
ul, h6 { margin: 0; padding: 0; list-style: none; font-weight: 400; }
svg { flex: none; display: block; }
svg text { font-family: "Open Sans", sans-serif; font-weight: 700; fill: #fff; text-anchor: middle; }
.defs { display: none; }
.push { flex: 1; }
.caret, .up { flex: none; width: 0; height: 0; border: 3px solid transparent; border-top: 4px solid #777; border-bottom: 0; }
.up { border-top: 0; border-bottom: 4px solid #777; }
.arrow-l, .arrow-r { flex: none; width: 0; height: 0; border: 4px solid transparent; border-left: 0; border-right: 5px solid #777; }
.arrow-r { border-right: 0; border-left: 5px solid #777; }

.desktop { display: flex; height: 100%; }
.screen { position: relative; display: flex; flex-direction: column; min-width: 0; height: 100%; overflow: hidden; }
.screen--left { flex: 17 1 0; }
.screen--right { flex: 24 1 0; background: #fff; }
.void { flex: 0 0 312px; }
.work { display: flex; flex: 1; min-height: 0; }

/* desktop panel */
.panel { flex: none; display: flex; justify-content: space-between; height: 18px; padding: 0 6px; background: linear-gradient(#5a584f, #3e3d38); color: #dfdbd2; line-height: 18px; }
.panel-menu { display: flex; color: #bdb9ae; font-size: 11px; white-space: nowrap; }
.panel-menu i { color: #8b887e; }
.indicators { display: flex; align-items: center; gap: 8px; margin-left: auto; }
.indicators svg { width: 16px; height: 16px; }
.indicators .i-bt { width: 8px; }
.indicators .i-bat { width: 20px; height: 12px; }
.indicators .i-gear { width: 14px; height: 14px; }
.indicators .pct { font-size: 11px; margin-left: -6px; }

/* launcher */
.launcher { display: flex; flex-direction: column; gap: 6px; width: 48px; flex: none; padding: 6px 4px 4px 5px; overflow: hidden; }
.launcher--solid { background: linear-gradient(90deg, #4a1040, #641a57); }
.launcher--glass { position: absolute; left: 0; top: 18px; bottom: 0; background: rgba(86, 10, 73, .66); }
.tile { position: relative; flex: none; height: 39px; border-radius: 4px; box-shadow: inset 0 0 0 1px rgba(255, 255, 255, .25); background: var(--tile); }
.tile::before { content: ""; position: absolute; left: -5px; top: 17px; border: 3px solid transparent; border-left: 4px solid rgba(255, 255, 255, .75); border-right: 0; }
.tile.idle::before { display: none; }
.tile button, .tile svg { width: 100%; height: 100%; }
.launcher--solid .tile:nth-child(16) { margin-top: -3px; }
.launcher--solid .tile:nth-child(n+17) { height: 14px; margin-top: -5px; }
.launcher--glass .tile:last-child { margin-top: auto; }

/* screenshot tool */
.shutter { flex: 1; min-width: 0; display: flex; flex-direction: column; background: #f2f1f0; font-size: 11px; color: #5b5b58; }
.sh-toolbar { display: flex; align-items: center; height: 38px; padding: 0 8px 2px 10px; gap: 15px; color: #8d8d8a; }
.sh-toolbar svg { width: 20px; height: 20px; }
.sh-toolbar svg.wide { width: 24px; }
.sh-toolbar hr { width: 1px; height: 20px; margin: 0 -2px; border: 0; background: #d5d3d0; }
.sh-toolbar button { gap: 4px; }
.sh-toolbar .caret { border-width: 5px 4px 0; margin-left: 14px; border-top-color: #999; }
.sh-toolbar .w70 { width: 47px; gap: 6px; }
.sh-toolbar .w89 { width: 73px; }
.sh-toolbar .sh-edit { width: 59px; height: 34px; border: 1px solid #f0a081; border-radius: 4px; background: #f4d9cf; color: #555; }
.sh-toolbar .sh-edit svg { width: 22px; height: 24px; }
.sh-toolbar .sh-export { margin-left: -8px; color: #666; }
.sh-tabs { display: flex; align-items: flex-end; height: 30px; padding: 0 2px 0 7px; gap: 2px; border-bottom: 1px solid #bab8b5; }
.sh-tabs .arrow-l { margin: 0 5px 10px 0; }
.sh-tabs .arrow-r { margin: 0 0 10px 8px; border-left-color: #bbb; }
.sh-tab { flex: 1; display: flex; align-items: center; justify-content: space-between; height: 27px; padding: 0 7px 0 5px; border: 1px solid #bab8b5; border-bottom: 0; border-radius: 4px 4px 0 0; background: linear-gradient(#eeedeb, #dedcd9); white-space: nowrap; }
.sh-tab--on { height: 29px; background: #fafaf9; }
.sh-tab svg { width: 14px; height: 14px; }
.thumb { width: 25px; height: 17px; background: #fff; }
.thumb--dark { height: 10px; background: #30363a; }
.thumb--tall { height: 17px; }
.thumb--text { background: repeating-linear-gradient(#fff 0 4px, #aaa 4px 5px); }
.thumb--form { height: 12px; background: linear-gradient(#e8dcc0 2px, #fafafa 2px); }
.thumb--cols { background: repeating-linear-gradient(90deg, #bbb 0 1px, #eee 1px 4px); }
.sh-view { flex: 1; min-height: 0; overflow: hidden; padding: 0 85px 0 86px; border-left: 1px solid #c9c7c4; background: linear-gradient(#f37c4e, #f37c4e) right top / 4px 579px no-repeat; border-right: 1px solid #ddd; }
.sh-status { display: flex; align-items: center; gap: 12px; height: 28px; padding: 0 34px 0 3px; border-top: 1px solid #bab8b5; }
.sh-status label { display: flex; align-items: center; }
.sh-status input[type=checkbox] { appearance: none; width: 14px; height: 14px; margin-right: 7px; border: 1px solid #999; border-radius: 3px; background: #fff; }
.spin { width: 42px; height: 24px; margin-left: 4px; padding-left: 4px; border: 1px solid #bab8b5; border-radius: 3px 0 0 3px; background: #fff; }
.steps { display: flex; flex-direction: column; align-items: center; justify-content: space-around; width: 16px; height: 24px; border: 1px solid #bab8b5; border-left: 0; border-radius: 0 3px 3px 0; }

table { table-layout: fixed; width: 100%; border-collapse: separate; border-spacing: 0; }
td, th { padding: 0; overflow: hidden; white-space: nowrap; font-weight: 400; }
.num { text-align: right; }
.photo { background: #fff; color: #1c1c1c; font: 300 22px/24px "Liberation Serif", "Noto Sans CJK SC", serif; }
.c-name { width: 266px; }
.c-std { width: 108px; }
.photo th, .photo td { height: 27px; padding: 2px 5px 0 4px; border-right: 1px solid #adadad; border-bottom: 1px solid #b2b2b2; text-align: left; }
.photo td:first-child, .photo td:nth-child(2) { padding-right: 0; }
.photo td.num { text-align: right; }
.photo .sliver th { height: 7px; padding: 0; background: #f0f0f0; }
.photo .sliver th:nth-child(9) { background: #bfe4a9; border-bottom: 2px solid #5a9a3c; }
.photo .head th { padding: 0 0 0 4px; }
.photo .head th:nth-child(9) { border-bottom: 3px solid #5a9a3c; }
.cellhead { display: flex; align-items: center; justify-content: space-between; height: 24px; }
.cellhead span { overflow: hidden; }
.filter { flex: none; width: 22px; height: 22px; border: 1px solid #9a9ca6; background: linear-gradient(#f6f6fa, #dcdde4); }
.filter .caret { border-width: 7px 6px 0; border-top-color: #555; }
.filter svg { width: 18px; height: 16px; }
.err { background: linear-gradient(135deg, #2b6b2b 50%, transparent 50%) left top / 8px 8px no-repeat; }
.grid .err { background: linear-gradient(135deg, #008000 50%, transparent 50%) left top / 6px 6px no-repeat; }

/* spreadsheet */
.excel { flex: 1; min-height: 0; display: flex; flex-direction: column; font-family: "Noto Sans CJK SC", "Open Sans", sans-serif; }
.x-tabs { flex: none; display: flex; height: 33px; padding-top: 7px; border-bottom: 1px solid #d4d4d4; line-height: 23px; background: linear-gradient(#8a8a86, #fff 5px); }
.x-tabs a { width: 53px; text-align: center; }
.x-tabs a.x-wide { width: 78px; margin-left: -1px; }
.x-tabs a.x-file { width: 59px; margin-right: 4px; background: #217346; }
.x-tabs a.on { width: 51px; height: 26px; color: #217346; border: 1px solid #d4d4d4; border-bottom: 0; background: #fff; }
.avatar { width: 24px; height: 24px; }
.x-tabs a:last-of-type { width: 38px; }
.ribbon { flex: none; display: flex; height: 93px; padding: 4px 0; border-bottom: 1px solid #d4d4d4; color: #444; }
.grp { flex: none; display: flex; flex-direction: column; justify-content: space-between; border-right: 1px solid #e1e1e1; }
.grp h6 { position: relative; font-size: 12px; line-height: 16px; color: #666; text-align: center; }
.grp h6 svg { position: absolute; right: 3px; bottom: 2px; width: 8px; height: 8px; }
.ribbon .fold { width: 10px; height: 8px; align-self: flex-end; margin-right: 10px; }
.body { height: 68px; padding: 6px 0 0 4px; display: flex; flex-direction: column; gap: 8px; }
.row { display: grid; align-items: center; }
.row svg, .stack svg { width: 16px; height: 16px; }
.row button { height: 22px; gap: 5px; }
.row .bar { border-right: 1px solid #d9d9d9; }
.stack { display: flex; flex-direction: column; gap: 7px; padding: 3px 0 0; }
.stack button { height: 16px; gap: 4px; justify-content: flex-start; }
.stack .caret { margin-left: 6px; }
.stack .far { margin-left: 8px; }
.g-clip { width: 116px; }
.g-clip .body { padding: 3px 0 0 48px; gap: 7px; }
.g-clip h6 { text-align: left; padding-left: 33px; }
.g-font { width: 250px; }
.g-align { width: 239px; }
.g-num { width: 141px; }
.g-style { width: 674px; }
.g-cell { width: 136px; }
.g-edit { width: 229px; }
.ribbon select { appearance: none; height: 23px; padding-left: 3px; border: 1px solid #ababab; color: #222; background: linear-gradient(45deg, transparent 50%, #777 50%) right 9px center / 3px 3px no-repeat, linear-gradient(-45deg, transparent 50%, #777 50%) right 6px center / 3px 3px no-repeat, #fff; }
.r-font1 { grid-template-columns: 157px 40px 26px 21px; }
.r-font1 select + select { border-left: 0; }
.big-a { font-size: 16px; }
.small-a { font-size: 14px; }
.row sup { font-size: 9px; color: #3d7ab8; line-height: 8px; margin: -10px 0 0 -5px; }
.r-font2 { grid-template-columns: 22px 22px 39px 42px 37px 40px 38px; font-size: 13px; }
.wen { font-size: 9px; line-height: 9px; text-align: center; }
.wen i { font-style: normal; color: #3d7ab8; font-size: 11px; }
.g-align .body { padding-left: 5px; }
.r-al { grid-template-columns: 22px 22px 22px 58px 1fr; }
.r-al2 { grid-template-columns: 22px 22px 22px 36px 22px 1fr; }
.r-al2 button:nth-child(4) { padding-left: 12px; }
.row .lit { height: 23px; background: #9fd5b7; padding-top: 8px; }
.row .lift { padding-bottom: 8px; }
.row .txt { justify-content: flex-start; gap: 3px; padding-left: 6px; }
.row .txt .caret { margin-left: 8px; }
.row .gap { padding-left: 8px; }
.r-num1 { grid-template-columns: 131px; }
.r-num2 { grid-template-columns: 36px 20px 26px 28px 22px; }
.r-num2 button { font-size: 14px; }
.row .comma { font-weight: 700; font-size: 18px; }
.r-num2 .dec { font-size: 8px; line-height: 8px; text-align: right; }
.dec i { color: #3d7ab8; font-style: normal; }
.sty { flex-direction: row; gap: 0; padding: 1px 0 0 5px; height: 70px; }
.tall { flex-direction: column; justify-content: flex-start; line-height: 15px; }
.tall svg { width: 32px; height: 32px; margin: 2px 0 3px; }
.tall > .caret { margin-top: 4px; }
.tall span { display: flex; align-items: center; gap: 3px; }
.sty .tall:first-child { width: 54px; }
.sty .tall:nth-child(2) { width: 61px; }
.gallery { display: grid; grid-template-columns: repeat(5, 100px); gap: 6px; align-content: center; width: 533px; height: 61px; padding-left: 4px; border: 1px solid #ababab; }
.st { height: 22px; padding-left: 4px; justify-content: flex-start; font-size: 16px; line-height: 18px; }
.normal { outline: 3px solid #9fd5b7; color: #000; }
.bad { background: #ffc7ce; color: #9c0006; }
.good { background: #c6efce; color: #006100; }
.neutral { background: #ffeb9c; color: #9c6500; }
.calc { border: 1px solid #7f7f7f; background: #f2f2f2; color: #fa7d00; font-weight: 700; }
.check { border: 3px double #3f3f3f; background: #a5a5a5; color: #fff; font-weight: 700; padding-left: 2px; }
.explain { color: #7f7f7f; font-style: italic; }
.warn { color: #f00; }
.linked { color: #fa7d00; border-bottom: 3px double #fa7d00; }
.output { border: 1px solid #3f3f3f; background: #f2f2f2; font-weight: 700; }
.gal-nav { display: grid; width: 15px; height: 61px; }
.gal-nav button { border: 1px solid #ababab; border-left: 0; }
.gal-nav button + button { border-top: 0; }
.over { box-shadow: 0 -6px 0 -3px #777; }
.cells { flex-direction: row; gap: 0; padding: 1px 0 0 5px; height: 70px; }
.cells .tall { width: 42px; }
.edit { flex-direction: row; gap: 0; padding: 1px 0 0 6px; height: 70px; }
.edit .stack { width: 88px; padding-top: 2px; }
.edit .tall { width: 65px; }
.formula { flex: none; display: flex; height: 44px; padding: 10px 5px 10px 0; background: #fff; }
.namebox { width: 107px; display: flex; align-items: center; justify-content: flex-end; padding-right: 7px; border: 1px solid #c6c6c6; }
.formula .grip { width: 30px; text-align: center; line-height: 24px; }
.fx { width: 110px; display: flex; align-items: center; justify-content: space-around; border: 1px solid #c6c6c6; font: italic 17px "Liberation Serif", serif; }
.fx svg { width: 12px; height: 12px; }
.fx small { font-size: 12px; }
.formula input { flex: 1; margin-left: 3px; padding: 0 14px; border: 1px solid #c6c6c6; border-right: 0; font-size: 14px; }
.more { width: 22px; height: 24px; padding: 8px 6px; border: 1px solid #c6c6c6; border-left: 0; }
.sheet-wrap { position: relative; flex: 1; min-height: 0; display: flex; background: #f6f6f6; }
.sheet { flex: 1; min-width: 0; overflow: hidden; background: #fff; border-right: 1px solid #9b9b9b; border-bottom: 1px solid #ababab; }
.grid { color: #000; font: 300 16px/16px "Liberation Serif", "Noto Sans CJK SC", serif; }
.grid th, .grid td { height: 19px; padding: 2px 3px 0; border-right: 1px solid #d4d4d4; border-bottom: 1px solid #d4d4d4; }
.grid thead th { padding: 1px 0 0; font-weight: 700; color: #217346; background: #e1e1e1; border-right-color: #bbb; border-bottom: 2px solid #217346; }
.grid tbody th { padding: 2px 0 0; background: #fff; color: #444; }
.grid tr.above td, .grid tr.above th { padding-top: 1px; border-bottom: 2px solid #217346; }
.grid tr.sel td { background-color: #c6c6c6; border-color: #a6a6a6; }
.grid tr.sel--first td:nth-child(2) { background-color: #fff; }
.grid tr.sel--last td { padding-top: 1px; border-bottom: 2px solid #217346; }
.vbar { flex: none; width: 22px; display: flex; flex-direction: column; padding: 2px 3px 0 4px; }
.vbar button, .hbar button { width: 15px; height: 15px; flex: none; border: 1px solid #ababab; background: #fff; }
.vthumb { flex: 49; border: 1px solid #ababab; border-top: 0; background: #fff; }
.vtrack { flex: 1; background: #f0f0f0; }
.paste-tag { position: absolute; left: 48px; top: 231px; display: flex; align-items: center; gap: 4px; height: 23px; padding: 0 4px 0 3px; border: 1px solid #ababab; background: #fff; }
.x-sheets { flex: none; display: flex; align-items: flex-start; height: 27px; background: #f6f6f6; line-height: 24px; padding-right: 21px; font-family: "Open Sans", sans-serif; }
.x-sheets .nav { display: flex; align-items: center; gap: 24px; height: 23px; width: 101px; padding-left: 26px; border-right: 1px solid #ababab; }
.x-sheets .nav b { opacity: .45; }
.x-sheets a { width: 58px; text-align: center; }
.x-sheets a.on { width: 69px; background: #fff; color: #217346; border: 1px solid #ababab; border-top: 0; border-bottom: 2px solid #217346; line-height: 22px; }
.plus { width: 17px; height: 17px; margin: 4px 0 0 33px; }
.hbar { display: flex; width: 728px; height: 15px; margin: 6px 0 0 12px; }
.hthumb { flex: 1; border: 1px solid #ababab; border-left: 0; background: #fff; }
.htrack { width: 35px; background: #e8e8e8; }
.x-status { flex: none; display: flex; align-items: center; height: 23px; padding-left: 7px; gap: 16px; background: #217346; color: #fff; line-height: 22px; }
.x-status > button { width: 38px; height: 23px; }
.x-status > button + button { margin-left: -16px; }
.x-status button svg { width: 14px; height: 14px; }
.x-status .lit { background: #0a5f32; margin-left: 3px; }
.ime { display: flex; align-items: center; justify-content: space-between; width: 203px; height: 23px; margin-left: 2px; padding-right: 4px; background: #fff; color: #1c74c8; font-weight: 700; font-size: 15px; }
.ime svg { width: 15px; height: 15px; }
.ime svg.logo { width: 27px; height: 27px; }
.taskbar { flex: none; display: flex; align-items: center; height: 39px; padding-left: 58px; background: #8193ab; border-top: 1px solid #a9b4c4; color: #fff; font-size: 13px; }
.t-icon { width: 61px; }
.t-icon svg { width: 32px; height: 30px; }
.t-icon + .t-icon { margin-right: 3px; }
.t-win { width: 158px; height: 38px; margin-right: 4px; padding-left: 10px; gap: 6px; justify-content: flex-start; border: 1px solid #dfe6ee; border-radius: 3px; outline: 1px solid #4a5a70; outline-offset: -1px; background: linear-gradient(160deg, #b9c5d3 30%, #8c9db3 60%); font-family: "Noto Sans CJK SC", sans-serif; font-size: 12px; }
.t-win--on { background: linear-gradient(160deg, #dfe6ee 20%, #a9b7c9 70%); }
.t-win svg { width: 28px; height: 28px; }
.tray { display: flex; align-items: center; gap: 8px; margin-right: 12px; font: 12px "Liberation Mono", monospace; }
.tray svg { width: 16px; height: 16px; }
.clock { width: 74px; text-align: center; line-height: 18px; font-size: 12px; }
.peek { width: 13px; height: 38px; border: 1px solid #4c5b70; background: linear-gradient(#4c5b70, #9aa8ba); }

/* find dialog */
.dialog { position: absolute; right: 101px; top: 229px; width: 484px; height: 222px; padding: 1px 7px 7px; border: 1px solid #3f454d; border-radius: 5px 5px 1px 1px; background: linear-gradient(#bccddd, #d7e4f2 30px); color: #000; }
.d-title { display: flex; align-items: center; gap: 2px; height: 28px; padding: 4px 2px 0 3px; color: #4a5468; }
.d-title span { flex: 1; }
.d-title button { width: 31px; height: 17px; border: 1px solid #8d9bb8; border-radius: 2px; font-weight: 700; }
.d-title svg { width: 12px; height: 12px; }
.d-body { height: 184px; padding: 8px 7px 0 6px; background: #f0f0f0; }
.d-tabs { display: flex; align-items: flex-end; height: 24px; }
.d-tabs button { width: 53px; height: 22px; border: 1px solid #8b8b96; border-bottom: 0; border-left: 0; background: linear-gradient(#f2f2f2 50%, #dcdcdc 50%, #cfcfcf); }
.d-tabs .on { width: 61px; height: 25px; margin-bottom: -1px; border-left: 1px solid #8b8b96; background: #fff; z-index: 1; }
.d-pane { height: 108px; padding: 10px 7px; border: 1px solid #8b8b96; background: #fff; }
.d-field { display: flex; align-items: center; justify-content: space-between; }
.combo { display: flex; width: 360px; height: 23px; border: 1px solid #ababb0; }
.combo input { flex: 1; padding-left: 3px; min-width: 0; }
.combo button { width: 17px; height: 21px; border: 1px solid #707070; background: linear-gradient(#f2f2f2, #cfcfcf); }
.combo .caret { border-top-color: #000; }
.btn { height: 25px; border: 1px solid #707070; border-radius: 3px; background: linear-gradient(#f2f2f2 50%, #dddddd 50%, #cfcfcf); }
.b-opt { width: 78px; margin: 38px 0 0 auto; }
.d-foot { display: flex; justify-content: flex-end; padding-top: 10px; }
.b-all { width: 77px; margin-right: 10px; }
.b-next { width: 91px; margin-right: 19px; border: 2px solid #3cc4f0; }
.b-close { width: 74px; }
```
FILE: app.js
```js
const apps = [
  ['ubuntu', 'Dash', '#8e2a82', 1], ['files', '文件', '#a5403a'], ['store', '软件中心', 'rgba(150,70,110,.6)', 1],
  ['blue', '词典', 'rgba(130,60,130,.6)', 1], ['chrome', 'Chrome', '#a98f3f'], ['term', '终端', 'rgba(130,90,130,.6)', 1],
  ['red', 'Terminator', '#b8323a'], ['nav', 'Navicat', '#fff', 1], ['ws', 'WebStorm', '#3ba3ad'], ['pc', 'PyCharm', '#38a64c'],
  ['green', '机器人', '#43a843'], ['edit', '文本编辑器', '#a89ca6'], ['update', '软件更新器', '#3f7a38'], ['remote', '远程桌面', '#4468ac'],
  ['shutter', 'Shutter', '#3f86b4'], ['post', 'Postman', '#b5562f'], ['disk', '磁盘', 'rgba(150,90,140,.5)', 1], ['trash', '回收站', 'rgba(120,60,120,.5)', 1]
];
document.querySelectorAll('.launcher').forEach(ul => {
  ul.innerHTML = apps.map(([id, name, tile, idle]) =>
    `<li class="tile${idle ? ' idle' : ''}" style="--tile:${tile}"><button aria-label="${name}"><svg><use href="#a-${id}"/></svg></button></li>`).join('');
});
const ic = n => `<svg class="i-${n}"><use href="#i-${n}"/></svg>`;
document.querySelectorAll('.indicators').forEach(el => {
  el.innerHTML = ic('pcnet') + ic('pcnet') + ic('kbd') + ic('wifi') + ic('bt') + ic('bat') + '<span class="pct">(94%)</span>' + ic('mute') + '<span>10:13</span>' + ic('gear');
});

const photo = document.querySelector('.photo');
const heads = ['商户', '负责人', '品牌', '需报价总数', '未报价数量', '已报价数量', '已报价占比', '是否报价', '是否签约'];
const funnel = '<svg viewBox="0 0 18 16"><path d="M1 2h11L8 7v7H5V7zM12 10h5M12 13h5" fill="#555" stroke="#555"/></svg>';
photo.tHead.innerHTML = '<tr class="sliver">' + '<th></th>'.repeat(10) + '</tr><tr class="head">' +
  heads.map((h, i) => `<th><div class="cellhead"><span>${h}</span><button class="filter" aria-label="筛选${h}">${i > 6 ? funnel : '<b class="caret"></b>'}</button></div></th>`).join('') + '<th></th></tr>';
const photoRows = `南京佳荣汽车销售服务有限|张鹏|铃木|7
南京利禾汽车销售服务有限|陶文志|奔驰|189
南京利禾汽车销售服务有限|陶文志|宝马|149
南京利禾汽车销售服务有限|陶文志|奥迪|98
南京高淳协众汽车销售服务|陶文志|大众|147
南京佳泽信汽车销售有限公|陶文志|日产|122
江苏宁枫君豪汽车销售服务|陶文志|MG|78
南京玖跃汽车销售服务有限|周奇山|大众|154
江苏东联汽车销售服务有限|周奇山|雷诺|18
南京车媒婆汽车销售服务有|陈漭|大众|102
南京车媒婆汽车销售服务有|陈漭|现代|58
南京顺天红韵汽车销售有限|陈漭|荣威|121
南京顺天红韵汽车销售有限|陈漭|汉腾|34
南京丽捷汽车销售服务有限|陈漭|长城|85
南京丽捷汽车销售服务有限|陈漭|北京汽车|32
南京悦享汽车销售服务有限|陈漭|海马|66
南京悦享汽车销售服务有限|陈漭|观致|41
南京和平汽车销售有限公司|陈漭|福迪|76
南京和平汽车销售有限公司|陈漭|道奇|6
南京禹义汽车销售服务有限|陈漭|观致|41
南京禹义汽车销售服务有限|陈漭|领克|6
张家港保税区万鑫达汽车国|陈漭|阿尔法·罗|10
南京丽德汽车销售有限公司|夏超|长安轿车|161`.split('\n').map(r => r.split('|'));
photo.tBodies[0].innerHTML = photoRows.map(([a, b, c, n]) =>
  `<tr><td>${a}</td><td>${b}</td><td>${c}</td><td class="num">${n}</td><td class="num">${n}</td><td class="num">0</td><td class="err">0.00</td><td class="num">0</td><td class="num">1</td><td></td></tr>`).join('');

const grid = document.querySelector('.grid');
const widths = [28, 72, 102, 289, 72, 111, 93, 93, 93].concat(Array(13).fill(72));
grid.querySelector('colgroup').innerHTML = widths.map(w => `<col style="width:${w}px">`).join('') + '<col>';
grid.tHead.innerHTML = '<tr><th></th>' + [...'ABCDEFGHIJKLMNOPQRSTU'].map(l => `<th>${l}</th>`).join('') + '<th></th></tr>';
const rows = `城市|专员|商户|品牌|需报价总数量|未报价数量|已报价数量|已报价占比
南京|13851952256|南京佳荣汽车销售服务有限公司|铃木|7|7|0|0.00
南京|17712877691|南京利禾汽车销售服务有限公司|奔驰|189|189|0|0.00
南京|17712877691|南京利禾汽车销售服务有限公司|宝马|149|149|0|0.00
南京|17712877691|南京利禾汽车销售服务有限公司|奥迪|98|98|0|0.00
南京|17712877691|南京高淳协众汽车销售服务有限公司|大众|147|147|0|0.00
南京|17712877691|南京佳泽信汽车销售有限公司|日产|122|7|115|0.94
南京|17712877691|江苏宁枫君豪汽车销售服务有限公司|MG|78|78|0|0.00
南京|17761790705|南京玖跃汽车销售服务有限公司|大众|154|154|0|0.00
南京|18705185781|南京车媒婆汽车销售服务有限公司|大众|102|102|0|0.00
南京|18705185781|南京车媒婆汽车销售服务有限公司|现代|58|58|0|0.00`.split('\n').map(r => r.split('|'));
let html = '';
for (let r = 0; r < 42; r++) {
  const cls = r === 8 ? 'above' : r === 9 ? 'sel sel--first' : r === 10 ? 'sel sel--last' : '';
  html += `<tr class="${cls}"><th>${r + 1}</th>`;
  for (let c = 0; c < 22; c++) {
    const v = (rows[r] || [])[c] || '';
    const k = r && v ? (c === 1 || c === 7 ? 'err' : c > 3 ? 'num' : '') : '';
    html += `<td class="${k}">${v}</td>`;
  }
  html += '</tr>';
}
grid.tBodies[0].innerHTML = html;
```
